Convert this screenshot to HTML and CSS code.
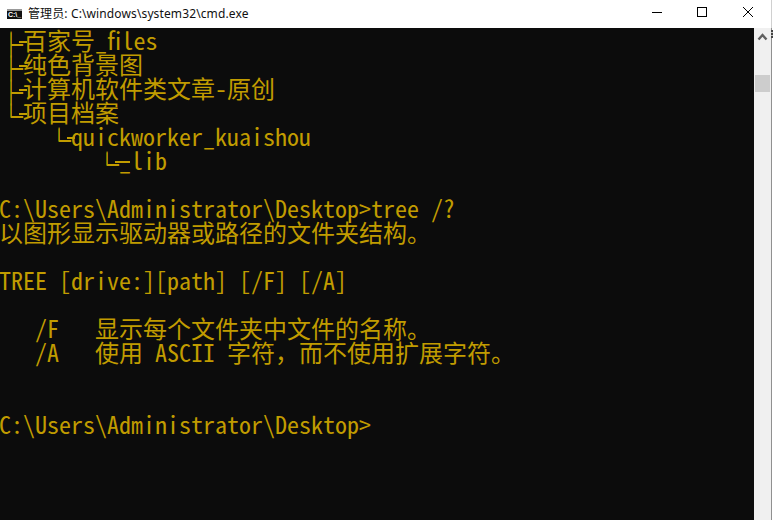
FILE: index.html
```html
<!DOCTYPE html>
<html lang="zh-CN">
<head>
<meta charset="utf-8">
<title>cmd.exe</title>
<link rel="stylesheet" href="styles.css">
</head>
<body>
<div class="window">
  <header class="titlebar">
    <div class="app-icon"><span class="app-icon-text">C:\_</span></div>
    <div class="title">管理员: C:\windows\system32\cmd.exe</div>
    <div class="controls">
      <svg class="ctl" width="46" height="28" viewBox="0 0 46 28"><path d="M19 12.5H29" stroke="#000" fill="none"/></svg>
      <svg class="ctl" width="46" height="28" viewBox="0 0 46 28"><rect x="18.5" y="7.5" width="9" height="9" stroke="#000" fill="none"/></svg>
      <svg class="ctl" width="46" height="28" viewBox="0 0 46 28"><path d="M18 7L28 17M28 7L18 17" stroke="#000" fill="none"/></svg>
    </div>
  </header>
  <main class="body">
    <div class="console">
    <pre class="output"><span class="box">├</span>百家号_files
<span class="box">├</span>纯色背景图
<span class="box">├</span>计算机软件类文章-原创
<span class="box">└</span>项目档案
    <span class="box">└</span>quickworker_kuaishou
        <span class="box box-long">└</span>_lib

C:\Users\Administrator\Desktop&gt;tree /?
以图形显示驱动器或路径的文件夹结构。

TREE [drive:][path] [/F] [/A]

   /F   显示每个文件夹中文件的名称。
   /A   使用 ASCII 字符<span class="fw">，</span>而不使用扩展字符。


C:\Users\Administrator\Desktop&gt;</pre>
    </div>
    <div class="scrollbar">
      <svg class="arrow" width="17" height="17" viewBox="0 0 17 17"><path d="M4.5 11.5L8.5 7L12.5 11.5" stroke="#606060" stroke-width="2.4" fill="none"/></svg>
      <div class="thumb"></div>
    </div>
  </main>
</div>
</body>
</html>
```
FILE: styles.css
```css
html, body {
  margin: 0;
  padding: 0;
  height: 100%;
  overflow: hidden;
  background: #fff;
}
.window {
  width: 773px;
  height: 520px;
  display: flex;
  flex-direction: column;
  box-sizing: border-box;
  border-right: 1px solid #fff;
}
.titlebar {
  height: 28px;
  flex: none;
  display: flex;
  align-items: center;
  background: #fff;
  padding-left: 7px;
  border-right: 1px solid #d0d0d0;
}
.app-icon {
  width: 15px;
  height: 10px;
  margin-top: -1px;
  background: #111;
  border-top: 2px solid #999;
  box-sizing: border-box;
  display: flex;
  align-items: center;
  justify-content: center;
  overflow: hidden;
}
.app-icon-text {
  font: bold 7px/8px "Liberation Sans", sans-serif;
  color: #fff;
}
.title {
  margin-left: 6px;
  font: 12px/16px "Noto Sans", "Noto Sans CJK SC", sans-serif;
  letter-spacing: 0.12px;
  color: #111;
  white-space: nowrap;
}
.controls {
  margin-left: auto;
  display: flex;
}
.ctl {
  display: block;
}
.body {
  flex: 1;
  min-height: 0;
  display: flex;
  position: relative;
  border-right: 1px solid #909090;
}
.body::after {
  content: "";
  position: absolute;
  right: -2px;
  top: 2px;
  width: 2px;
  height: 8px;
  background: repeating-linear-gradient(#444 0 2px, #bbb 2px 3px);
}
.console {
  flex: 1;
  min-width: 0;
  background: #0c0c0c;
  overflow: hidden;
}
.output {
  margin: 0 0 0 -1px;
  color: #c19c00;
  font-family: "Noto Sans CJK SC", sans-serif;
  font-size: 24px;
  line-height: 24px;
  font-feature-settings: "hwid" 1;
  white-space: pre;
}
.fw {
  font-feature-settings: normal;
}
.box {
  display: inline-block;
  position: relative;
  top: 3px;
  width: 24px;
  font-weight: 700;
  text-shadow: 0 1px 0 #c19c00;
}
.box::after {
  content: "";
  position: absolute;
  left: 20px;
  top: 10px;
  width: 8px;
  height: 2px;
  background: #c19c00;
}
.box-long::after {
  width: 15px;
}
.scrollbar {
  width: 17px;
  flex: none;
  background: #f0f0f0;
  display: flex;
  flex-direction: column;
  align-items: center;
}
.arrow {
  display: block;
}
.thumb {
  width: 15px;
  height: 17px;
  margin-top: 30px;
  background: #cdcdcd;
}
```
